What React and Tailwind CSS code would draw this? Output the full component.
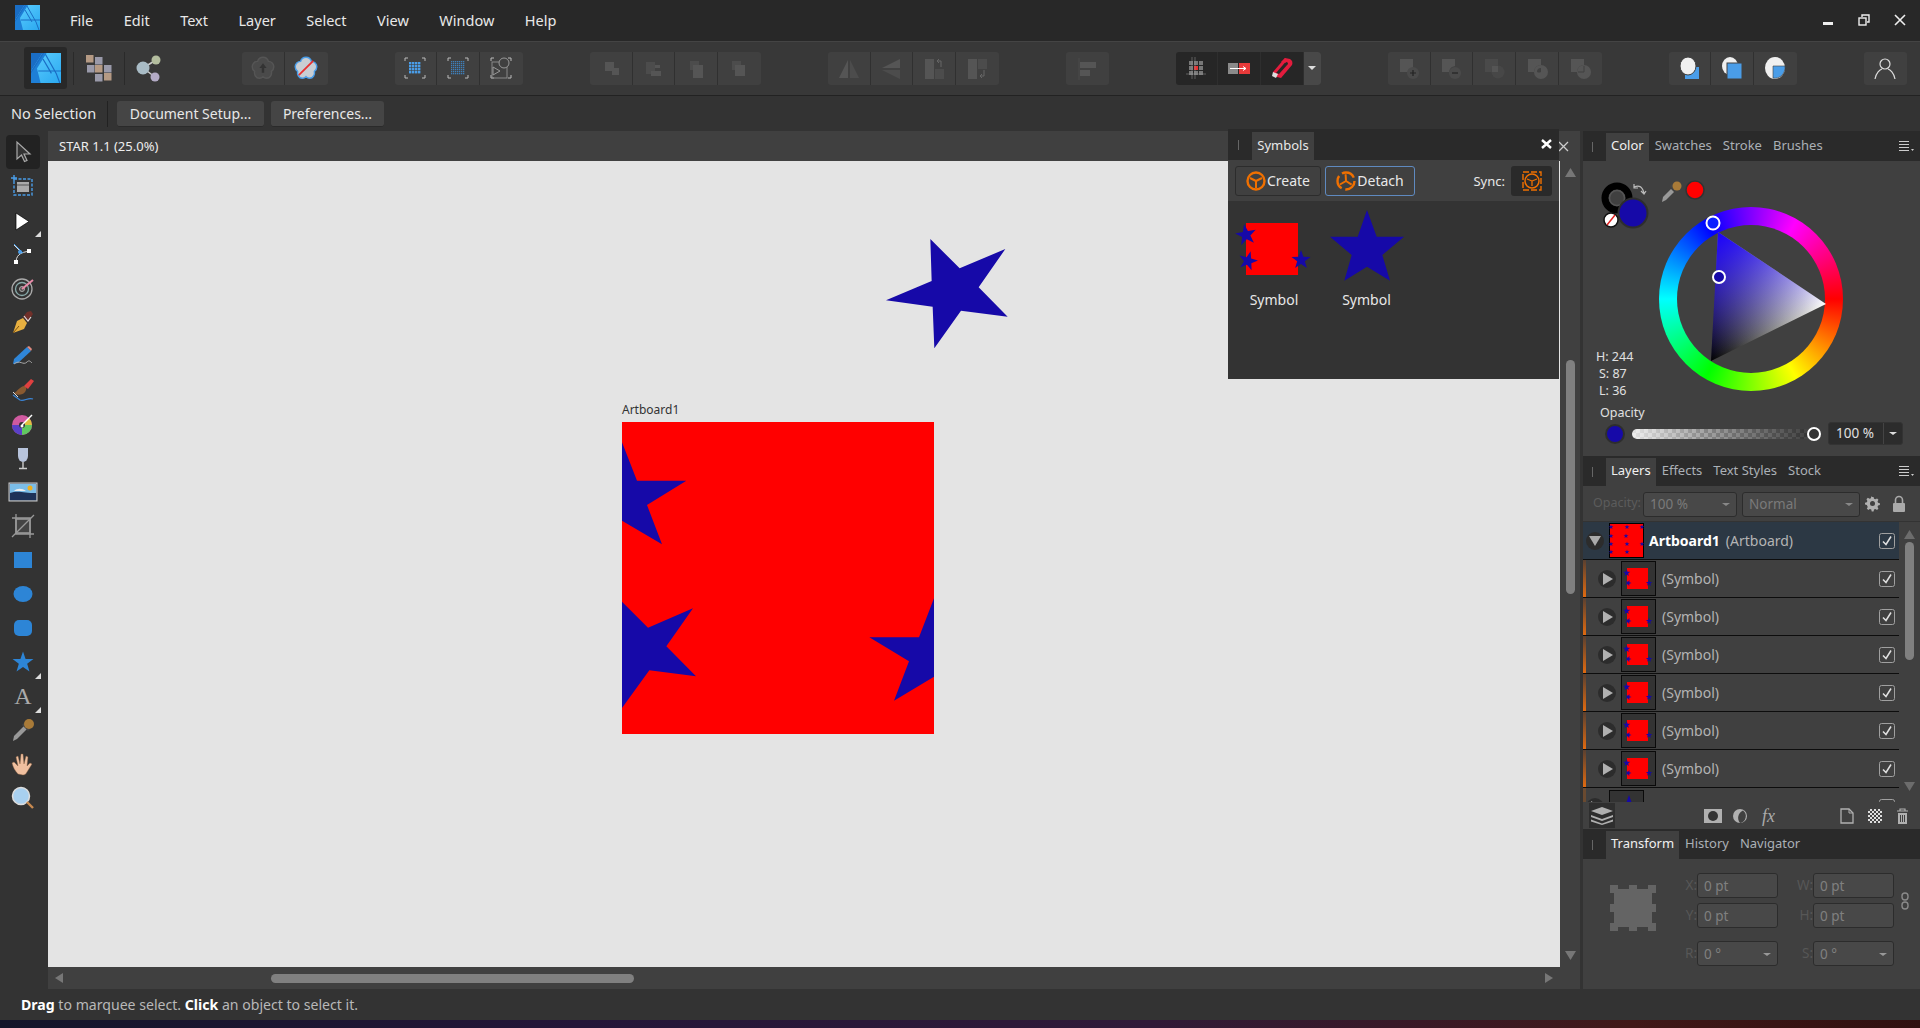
import React from 'react';

const BLUE = '#1609a8';
const starPts = (cx, cy, r, rot = 0) => {
  const p = [];
  for (let i = 0; i < 10; i++) {
    const a = (-90 + rot + i * 36) * Math.PI / 180;
    const rr = i % 2 ? r * 0.4 : r;
    p.push(`${(cx + rr * Math.cos(a)).toFixed(2)},${(cy + rr * Math.sin(a)).toFixed(2)}`);
  }
  return p.join(' ');
};

const S = ({ w = 24, h = 24, vb, children, className = '' }) => (
  <svg width={w} height={h} viewBox={vb || `0 0 ${w} ${h}`} className={`shrink-0 ${className}`}>{children}</svg>
);

const Logo = ({ size = 25 }) => (
  <S w={size} h={size} vb="0 0 25 25">
    <defs>
      <linearGradient id="lg" x1="0" y1="0" x2="1" y2="1"><stop offset="0" stopColor="#5fd0ff" /><stop offset="1" stopColor="#2aa8f0" /></linearGradient>
    </defs>
    <rect width="25" height="25" fill="url(#lg)" />
    <path d="M0 0H9.5L0 15Z" fill="#1a6dc4" />
    <path d="M0 15L9.5 0H12L0 19Z" fill="#1a6dc4" />
    <path d="M0 25V17L11 0H13L5 13L8 25Z" fill="#1e7fd6" />
    <path d="M6 15H25M12 1L21 17L24 25M10 5L17 17" stroke="#1a6dc4" strokeWidth="1" fill="none" />
  </S>
);

const Flower = ({ fill, stroke, children }) => (
  <S vb="2 2 20 20">
    <path d="M12 3c2.500 0 4 1.500 4.500 3.500 2.500 0 4.500 2 4.500 4.500 0 1.700-.9 3-2 3.800.5 2.700-1 5.700-4 5.700-1.200 0-2.200-.5-3-1.300-.8.800-1.800 1.300-3 1.300-3 0-4.500-3-4-5.700-1.100-.8-2-2.100-2-3.800 0-2.500 2-4.500 4.500-4.500C8 4.500 9.500 3 12 3Z" fill={fill} stroke={stroke} strokeWidth="1.200" />
    {children}
  </S>
);

const D = '#555555';
const icons = {
  up: <Flower fill="#4a4a4a" stroke="#555"><path d="M12 8l3 4h-2v4h-2v-4H9Z" fill="#333" /></Flower>,
  flower: <Flower fill="#c9ced3" stroke="#4a9de8"><path d="M6 18L18 6" stroke="#e83030" strokeWidth="1.500" /></Flower>,
  grid1: <S>
    <path d="M2 5V2h3M19 2h3v3M22 19v3h-3M5 22H2v-3" stroke="#bbb" fill="none" />
    {[6, 9, 12, 15].flatMap(x => [6, 9, 12, 15].map(y => <rect key={x + '-' + y} x={x} y={y} width="2.400" height="2.400" fill="#4a9de8" />))}
  </S>,
  grid2: <S>
    <path d="M2 5V2h3M19 2h3v3M22 19v3h-3M5 22H2v-3" stroke="#bbb" fill="none" />
    {[5, 7, 9, 11, 13, 15, 17].flatMap(x => [5, 7, 9, 11, 13, 15, 17].map(y => <rect key={x + '-' + y} x={x} y={y} width="1.300" height="1.300" fill="#3f7fb8" />))}
  </S>,
  sel3: <S>
    <path d="M2 5V2h3M19 2h3v3M22 19v3h-3M5 22H2v-3" stroke="#bbb" fill="none" />
    <rect x="3" y="6" width="15" height="16" fill="none" stroke="#888" />
    <circle cx="15" cy="7" r="5" fill="#404040" stroke="#999" />
    <path d="M4 11l7 4-7 4Z" fill="#404040" stroke="#999" />
  </S>,
  o1: <S><rect x="6" y="6" width="9" height="9" fill={D} /><rect x="13" y="12" width="7" height="7" fill={D} /></S>,
  o2: <S><rect x="5" y="6" width="9" height="12" fill="#4c4c4c" /><rect x="14" y="9" width="5" height="3" fill={D} /><rect x="10" y="15" width="10" height="5" fill={D} /></S>,
  o3: <S><rect x="6" y="5" width="9" height="9" fill="#4c4c4c" /><rect x="9" y="9" width="10" height="13" fill={D} /></S>,
  o4: <S><rect x="5" y="5" width="9" height="9" fill="#4c4c4c" /><rect x="8" y="9" width="10" height="11" fill={D} /></S>,
  f1: <S><path d="M11 4v18H2Z" fill={D} /><path d="M13 4v18h9Z" fill="#4c4c4c" /></S>,
  f2: <S><path d="M21 3v9H3Z" fill={D} /><path d="M21 14v9L3 14Z" fill="#4c4c4c" /></S>,
  f3: <S><rect x="3" y="3" width="9" height="20" fill={D} /><rect x="13" y="13" width="9" height="10" fill="#4c4c4c" /><path d="M19 11V5h-3m1-2l-2 2 2 2" stroke="#666" fill="none" /></S>,
  f4: <S><rect x="3" y="3" width="9" height="20" fill={D} /><rect x="13" y="3" width="9" height="10" fill="#4c4c4c" /><path d="M19 14v6h-4m2-2l-2 2 2 2" stroke="#666" fill="none" /></S>,
  align: <S><path d="M4 2v22" stroke="#4a4a4a" /><rect x="5" y="6" width="16" height="6" fill={D} /><rect x="5" y="14" width="10" height="6" fill={D} /></S>,
  snap1: <S>
    {[5, 10, 15].flatMap(x => [5, 10, 15].map(y => <rect key={x + '-' + y} x={x} y={y} width="4" height="4" fill={x === 10 && y === 10 ? '#e83030' : '#777'} />))}
    <path d="M2 18h20M8 1v22M11 1v22" stroke="#999" strokeWidth=".5" />
  </S>,
  snap2: <S><rect x="1" y="7" width="10" height="11" fill="#8a8a8a" /><rect x="12" y="7" width="11" height="11" fill="#e83a3a" /><path d="M3 12.500h16m-3-2 3 2-3 2" stroke="#fff" fill="none" /></S>,
  magnet: <S>
    <path d="M20 3a5 5 0 0 1 2 6L11 22 3 20 3 16 15 2Z" fill="#e31c3d" />
    <path d="M15.500 6a2 2 0 0 1 2.500 2L9 18l-3-1Z" fill="#262626" />
    <path d="M3 16l5 2-2 4-4-2Z" fill="#ddd" /><path d="M11 6l4-4 3 3-3 2Z" fill="#e31c3d" />
  </S>,
  b1: <S><rect x="3" y="3" width="13" height="13" fill={D} /><circle cx="16" cy="17" r="6" fill="#4a4a4a" /><path d="M13 17h6M16 14v6" stroke="#222" strokeWidth="1.200" /></S>,
  b2: <S><path d="M3 3h13v7a7 7 0 0 0-6 6H3Z" fill={D} /><circle cx="16" cy="17" r="6" fill="#4a4a4a" /><path d="M13 17h6" stroke="#222" strokeWidth="1.200" /></S>,
  b3: <S><rect x="3" y="3" width="13" height="13" fill="#4a4a4a" /><circle cx="16" cy="16" r="6.500" fill="#474747" /><path d="M10 10h6v6h-6Z" fill={D} /></S>,
  b4: <S><path d="M3 3h13v6a7 7 0 0 0-7 7H3Z" fill={D} /><path d="M9 16a7 7 0 0 1 7-7 7 7 0 0 1 0 14 7 7 0 0 1-7-7Zm3 0a4 4 0 0 0 4 0V12a4 4 0 0 0-4 4Z" fill={D} /></S>,
  b5: <S><path d="M3 3h13v6a7 7 0 0 0-7 7H3Z" fill={D} /><circle cx="16" cy="16" r="7" fill={D} /><path d="M16 10v6h-6" stroke="#404040" fill="none" /></S>,
  s1: <S><rect x="8" y="11" width="14" height="12" fill="#4a9de8" /><ellipse cx="11" cy="10" rx="8" ry="9" fill="#f0f0f0" stroke="#404040" /></S>,
  s2: <S><ellipse cx="10" cy="10" rx="8" ry="9" fill="#f0f0f0" /><rect x="7" y="7" width="15" height="16" fill="#4a9de8" stroke="#404040" /></S>,
  s3: <S><ellipse cx="12" cy="12" rx="10" ry="11" fill="#f0f0f0" /><path d="M10 10h12a10 11 0 0 1-12 12Z" fill="#4a9de8" stroke="#404040" strokeWidth=".6" /></S>,
  user: <S>
    <circle cx="12" cy="8" r="5" fill="none" stroke="#ddd" strokeWidth="1.200" />
    <path d="M2 23c1-6 5-9.500 7-10M22 23c-1-6-5-9.500-7-10" fill="none" stroke="#ddd" strokeWidth="1.200" />
  </S>,
};

const Btn = ({ k, dark }) => (
  <div className={`flex h-full w-[42.75px] items-center justify-center border-r last:border-r-0 ${dark ? 'border-[#2e2e2e]' : 'border-[#303030]'}`}>
    {icons[k]}
  </div>
);
const Group = ({ items, dark, children }) => (
  <div className={`flex h-[33px] rounded-[3px] ${dark ? 'bg-[#262626]' : 'bg-[#404040]'}`}>
    {items.map(k => <Btn key={k} k={k} dark={dark} />)}
    {children}
  </div>
);

const Toolbar = () => (
  <div className="flex h-[55px] items-center border-t border-[#444] bg-[#383838] pl-6">
    <div className="flex h-[42px] w-[43px] items-center justify-center rounded-[3px] bg-[#282828]"><Logo size={30} /></div>
    <div className="ml-[6px] h-[33px] w-px bg-[#2a2a2a]" />
    <div className="flex h-[33px] w-[50px] items-center justify-center">
      <S w={28} h={28}>
        {[[1, 1, '#b59a84'], [10, 3, '#9a9aaa'], [2, 11, '#9a9aaa'], [10, 11, '#b59a84'], [19, 11, '#9a9aaa'], [10, 20, '#9a9aaa'], [19, 19, '#b59a84']].map(([x, y, c]) => (
          <rect key={x + '-' + y} x={x} y={y} width="7.500" height="7.500" fill={c} />
        ))}
      </S>
    </div>
    <div className="h-[33px] w-px bg-[#2a2a2a]" />
    <div className="flex h-[33px] w-[46px] items-center justify-center">
      <S w={28} h={28}>
        <path d="M9 14L22 6M9 14L21 23" stroke="#ccc" strokeWidth="1.500" />
        <circle cx="9" cy="14" r="6.500" fill="#a9bcc6" />
        <circle cx="22" cy="6" r="4.500" fill="#b3bd9e" />
        <circle cx="21" cy="23" r="4.500" fill="#b3abc6" />
      </S>
    </div>
    <div className="ml-[71px] flex gap-[67px]">
      <Group items={['up', 'flower']} />
      <Group items={['grid1', 'grid2', 'sel3']} />
      <Group items={['o1', 'o2', 'o3', 'o4']} />
      <Group items={['f1', 'f2', 'f3', 'f4']} />
      <Group items={['align']} />
      <Group items={['snap1', 'snap2', 'magnet']} dark>
        <div className="flex w-[17px] items-center justify-center rounded-r-[3px] bg-[#484848]">
          <div className="h-0 w-0 border-x-[4px] border-t-[4px] border-x-transparent border-t-[#ddd]" />
        </div>
      </Group>
      <Group items={['b1', 'b2', 'b3', 'b4', 'b5']} />
      <Group items={['s1', 's2', 's3']} />
      <Group items={['user']} />
    </div>
  </div>
);

const TitleBar = () => (
  <div className="flex h-[41px] items-center bg-[#282828] pl-[15px] text-[14.500px] text-[#e8e8e8]">
    <div className="-mt-[5px]"><Logo /></div>
    <div className="ml-[30px] flex gap-[30.500px] pt-[2px]">
      {['File', 'Edit', 'Text', 'Layer', 'Select', 'View', 'Window', 'Help'].map(m => <span key={m}>{m}</span>)}
    </div>
    <div className="ml-auto flex items-center gap-[24px] pr-[14px]">
      <S w={12} h={12}><rect x="1" y="8" width="10" height="3" fill="#eee" /></S>
      <S w={12} h={12}><rect x="1" y="4" width="7" height="7" fill="none" stroke="#eee" strokeWidth="1.400" /><path d="M4 3V1h7v7H9" fill="none" stroke="#eee" strokeWidth="1.400" /></S>
      <S w={12} h={12}><path d="M1 1l10 10M11 1L1 11" stroke="#eee" strokeWidth="1.600" /></S>
    </div>
  </div>
);

const CtxBtn = ({ w, children }) => (
  <div className={`flex h-[26px] items-center justify-center rounded-[3px] border-b border-[#2a2a2a] bg-[#454545] text-[14px] text-[#e8e8e8] ${w}`}>{children}</div>
);
const ContextBar = () => (
  <div className="flex h-[36px] items-center border-t border-[#222] bg-[#333333] pl-[11px] text-[14.500px]">
    <span className="w-[96px] pt-[1px] text-[#e8e8e8]">No Selection</span>
    <div className="h-[26px] w-px bg-[#222]" />
    <div className="ml-[9px]"><CtxBtn w="w-[147px]">Document Setup...</CtxBtn></div>
    <div className="ml-[7px]"><CtxBtn w="w-[113px]">Preferences...</CtxBtn></div>
  </div>
);

const tools = [
  <S><path d="M6 2v17l4.500-4 3 6.500 2.500-1-3-6.500h6Z" fill="#333" stroke="#aaa" strokeWidth="1.200" /></S>,
  <S><rect x="3" y="5" width="18" height="16" fill="none" stroke="#4a9de8" strokeWidth="1.400" strokeDasharray="3 1.500" /><rect x="6" y="8" width="12" height="10" fill="#aaa" /><path d="M6 11h12" stroke="#555" /><path d="M3 1v6M0 4h6" stroke="#4a9de8" strokeWidth="1.400" /></S>,
  <S><path d="M5 5v17l13-8.500Z" fill="#fff" stroke="#000" strokeWidth=".7" /></S>,
  <S><path d="M3 3l8 8 M5 21c0-7 3-11 15-12" fill="none" stroke="#ddd" /><path d="M3 2l9 9" stroke="#4a9de8" /><circle cx="9" cy="10" r="2" fill="#4a9de8" /><rect x="16" y="7" width="4" height="4" fill="#fff" /><rect x="3" y="18" width="4" height="4" fill="#fff" /></S>,
  <S><circle cx="11" cy="13" r="10" fill="none" stroke="#aaa" strokeWidth="1.300" /><circle cx="11" cy="13" r="6.500" fill="none" stroke="#8aa" strokeWidth="1.300" /><circle cx="11" cy="13" r="2.500" fill="#555" stroke="#aaa" /><path d="M11 13L22 4" stroke="#e88aa8" strokeWidth="2" /></S>,
  <S><path d="M2 23l4-12 6-3 4 5-3 6Z" fill="#e8b040" /><path d="M2 23l6-7" stroke="#7a5010" /><path d="M12 7l5 5 5-8-2-3-4 1Z" fill="#70302a" /><path d="M13 6l4 5 3-4" stroke="#ddd" strokeWidth="1.200" fill="none" /></S>,
  <S><path d="M2 20l1-5L16 3l4 4L7 19Z" fill="#2f86d8" /><path d="M16 3l2-1 3 3-1 2Z" fill="#e08a80" /><path d="M3 20c6-5 9 2 13-2 2-2 3-1 5 1" fill="none" stroke="#aaa" /></S>,
  <S><path d="M3 15c3-1 5-6 10-7 3 0 3 3 1 6-2 3-8 4-11 1Z" fill="#8a5a30" /><path d="M13 8l7-7 3 2-6 8Z" fill="#e04040" /><path d="M2 17l7 5c4 2 8-3 13-1" fill="none" stroke="#3b86d8" strokeWidth="1.200" /><path d="M2 14l5 5" stroke="#ddd" /></S>,
  <S><circle cx="11" cy="13" r="10" fill="#d05aa0" /><path d="M11 13L1 13A10 10 0 0 0 11 23Z" fill="#5a40c8" /><path d="M11 13L11 23A10 10 0 0 0 21 13Z" fill="#60c860" /><path d="M11 13L21 13A10 10 0 0 0 18 6Z" fill="#e0c040" /><circle cx="11" cy="13" r="3" fill="#333" /><path d="M11 13l10-10" stroke="#fff" strokeWidth="1.400" /><circle cx="11" cy="14" r="1.500" fill="#fff" /></S>,
  <S><path d="M7 2h10v8a5 6 0 0 1-10 0Z" fill="#b8c4dc" /><path d="M12 16v6M8 22.500h8" stroke="#ccc" strokeWidth="1.400" /></S>,
  <S w={30} h={24}><rect x="1" y="3" width="28" height="18" fill="#4a5a70" stroke="#ccc" /><rect x="2" y="4" width="26" height="9" fill="#7bbde8" /><path d="M2 13c8-3 14 0 26 0v7H2Z" fill="#1e3258" /><circle cx="22" cy="8" r="2.500" fill="#eeb020" /><path d="M6 11c3-3 8-3 12 0Z" fill="#eee" /></S>,
  <S><rect x="5" y="5" width="14" height="14" fill="#444" stroke="#999" strokeWidth="1.600" /><path d="M1 4h18v20M23 20H5V0M1 23L23 1" fill="none" stroke="#999" strokeWidth="1.300" /></S>,
  <S><rect x="3" y="4" width="18" height="16" fill="#2d85d6" /></S>,
  <S><ellipse cx="12" cy="12" rx="9.500" ry="8" fill="#2d85d6" /></S>,
  <S><rect x="3" y="4" width="18" height="16" rx="5" fill="#2d85d6" /></S>,
  <S><polygon points={starPts(12, 12.500, 11)} fill="#2d85d6" /></S>,
  <span className="font-['Liberation_Serif',serif] text-[24px] leading-none text-[#aaa]">A</span>,
  <S><path d="M2 23l1-5L13 8l3 3L6 21Z" fill="#999" /><path d="M11 7l6 6 2-2-6-6Z" fill="#444" /><circle cx="18" cy="6" r="5" fill="#a87a38" /></S>,
  <S><path d="M7 22c-3-3-5-7-6-11l2-1 4 4L5 5l2-1 2 8 1-10h2l1 10 2-8 2 1-1 9 3-3 2 1-5 8c-1 2-2 3-4 3Z" fill="#f0c0a0" stroke="#8a6040" strokeWidth=".4" /></S>,
  <S><circle cx="10" cy="10" r="8.500" fill="#a8d0f0" stroke="#ddd" strokeWidth="1.500" /><path d="M16 16l6 6" stroke="#c88a50" strokeWidth="2.400" /></S>,
];
const ToolColumn = () => (
  <div className="w-[48px] shrink-0 bg-[#333333] pt-[4px]">
    {tools.map((t, i) => (
      <div key={i} className={`relative mx-[6px] flex h-[34px] w-[34px] items-center justify-center rounded-[4px] ${i === 0 ? 'bg-[#222222]' : ''}`}>
        {t}
        {(i === 2 || i === 15 || i === 16) && <div className="absolute -right-px bottom-0 h-0 w-0 border-b-[6px] border-l-[6px] border-b-[#ddd] border-l-transparent" />}
      </div>
    ))}
  </div>
);

const Canvas = () => (
  <div className="relative flex-1 overflow-hidden bg-[#e4e4e4]">
    <svg width="140" height="130" viewBox="0 0 420 390" className="absolute left-[832px] top-[69px]">
      <polygon points="151,27 239,115 376,57 296,172 383,260 243,242 163,355 158,230 18,211 155,153" fill={BLUE} />
    </svg>
    <span className="absolute left-[574px] top-[240px] text-[12px] text-[#333]">Artboard1</span>
    <svg width="312" height="312" viewBox="65 97 936 936" className="absolute left-[574px] top-[261px]">
      <rect x="65" y="97" width="936" height="936" fill="#ff0000" />
      <polygon points="65,158 110,273 258,273 140,346 185,464 65,393" fill={BLUE} />
      <polygon points="65,636 143,714 278,656 198,770 287,860 147,842 65,955" fill={BLUE} />
      <polygon points="1001,626 956,743 807,743 926,815 881,933 1001,861" fill={BLUE} />
    </svg>
  </div>
);

const ArrowUp = ({ c = '#777' }) => <svg width="11" height="9"><path d="M5.500 0L11 9H0Z" fill={c} /></svg>;
const ArrowDown = ({ c = '#777' }) => <svg width="11" height="9"><path d="M0 0H11L5.500 9Z" fill={c} /></svg>;

const CenterColumn = () => (
  <div className="flex w-[1532px] shrink-0 flex-col">
    <div className="flex h-[30px] items-center bg-[#404040] pl-[11px] pr-[11px] pt-[1px] text-[13px] text-[#eee]">
      <span>STAR 1.1 (25.0%)</span>
      <svg width="11" height="11" className="ml-auto"><path d="M1 1l9 9M10 1l-9 9" stroke="#ccc" strokeWidth="1.300" /></svg>
    </div>
    <div className="flex flex-1">
      <Canvas />
      <div className="flex w-[20px] shrink-0 flex-col items-center bg-[#404040] pt-[7px]">
        <ArrowUp />
        <div className="mt-[183px] h-[234px] w-[9px] rounded-full bg-[#808080]" />
        <div className="mt-auto mb-[7px]"><ArrowDown /></div>
      </div>
    </div>
    <div className="flex h-[22px] items-center bg-[#404040]">
      <div className="ml-[7px] h-0 w-0 border-y-[5px] border-r-[8px] border-y-transparent border-r-[#777]" />
      <div className="ml-[208px] h-[9px] w-[363px] rounded-full bg-[#808080]" />
      <div className="ml-[911px] h-0 w-0 border-y-[5px] border-l-[8px] border-y-transparent border-l-[#777]" />
    </div>
  </div>
);

const TabBar = ({ tabs, menu = true }) => (
  <div className="flex h-[30px] shrink-0 items-end bg-[#2a2a2a] text-[13px]">
    <div className="mb-[9px] ml-[9px] h-[10px] w-px bg-[#666]" />
    <div className="ml-[13px] flex h-[28px] items-center">
      {tabs.map((t, i) => (
        <span key={t} className={i === 0 ? 'flex h-full items-center bg-[#404040] px-[5px] pb-[2px] text-[#f0f0f0]' : 'mb-[2px] ml-[6px] mr-[5px] text-[#aab0b6]'}>{t}</span>
      ))}
    </div>
    {menu && (
      <div className="mb-[9px] ml-auto mr-[6px] flex">
        <svg width="15" height="12"><path d="M0 1.500h10M0 4.500h10M0 7.500h10M0 10.500h10" stroke="#ccc" /><path d="M12 9h3l-1.500 2Z" fill="#ccc" /></svg>
      </div>
    )}
  </div>
);

const ColorPanel = () => (
  <div className="flex h-[295px] shrink-0 flex-col bg-[#404040] text-[#e0e0e0]">
    <div className="mt-[19px] flex h-[220px]">
      <div className="flex w-[76px] shrink-0 flex-col justify-between pb-[1px] pl-[13px]">
        <svg width="110" height="50" className="shrink-0">
          <circle cx="21" cy="18" r="12" fill="none" stroke="#000" strokeWidth="7" />
          <circle cx="21" cy="18" r="7.500" fill="none" stroke="#555" strokeWidth="1.500" />
          <circle cx="37" cy="33" r="14.500" fill={BLUE} stroke="#2e2e2e" strokeWidth="2" />
          <circle cx="15" cy="40" r="7" fill="#fff" stroke="#111" strokeWidth="1.500" />
          <path d="M11 45l8-10" stroke="#e02020" strokeWidth="1.500" />
          <path d="M38 7c5-2 8-1 10 6M38 4v4h4M45 11l3 3 2-3" fill="none" stroke="#bbb" strokeWidth="1.200" />
          <path d="M66 22l1-5 8-8 3 3-8 8Z" fill="#999" />
          <path d="M74 6l6 6 2-2-6-6Z" fill="#444" />
          <circle cx="81" cy="6" r="4.500" fill="#a87a38" />
          <circle cx="99" cy="10" r="9" fill="#ff0000" stroke="#333" strokeWidth="1.500" />
        </svg>
        <div className="flex flex-col text-[12.500px] leading-[17px]">
          <span>H: 244</span>
          <span className="pl-[3px]">S: 87</span>
          <span className="pl-[3px]">L: 36</span>
        </div>
      </div>
      <div className="relative mt-[27px] flex h-[184px] w-[184px] items-center justify-center rounded-full bg-[conic-gradient(from_90deg,#ff0000,#ffff00,#00ff00,#00ffff,#0000ff,#ff00ff,#ff0000)]">
        <div className="h-[148px] w-[148px] rounded-full bg-[#404040]" />
        <svg width="184" height="184" className="absolute inset-0">
          <defs>
            <linearGradient id="tw" gradientUnits="userSpaceOnUse" x1="52" y1="154" x2="167" y2="97"><stop offset="0" stopColor="#000" /><stop offset="1" stopColor="#fff" /></linearGradient>
            <linearGradient id="tb" gradientUnits="userSpaceOnUse" x1="59" y1="25" x2="110" y2="125"><stop offset="0" stopColor="#1a00ff" /><stop offset="1" stopColor="#1a00ff" stopOpacity="0" /></linearGradient>
          </defs>
          <polygon points="59,25 167,97 52,154" fill="url(#tw)" />
          <polygon points="59,25 167,97 52,154" fill="url(#tb)" />
          <circle cx="54" cy="16" r="6.500" fill="#0a20ff" stroke="#fff" strokeWidth="2" />
          <circle cx="60" cy="70" r="6" fill={BLUE} stroke="#fff" strokeWidth="2" />
        </svg>
      </div>
    </div>
    <span className="ml-[17px] mt-[5px] h-[16px] text-[12.500px] leading-[16px]">Opacity</span>
    <div className="mt-[1px] flex h-[23px] items-center pl-[22px]">
      <div className="h-[20px] w-[20px] rounded-full border-2 border-[#2e2e2e] bg-[#1609a8]" />
      <div className="relative ml-[7px] mt-[1px] h-[10px] w-[182px] rounded-full bg-[linear-gradient(90deg,rgba(255,255,255,0.82),rgba(160,160,160,0.55)_40%,rgba(35,35,35,0.8)),repeating-conic-gradient(#a8a8a8_0_25%,#666666_0_50%)] bg-[length:100%_100%,8px_8px]">
        <div className="absolute -right-[7px] -top-[2px] h-[14px] w-[14px] rounded-full border-2 border-white bg-[#333]" />
      </div>
      <div className="ml-[14px] flex h-[23px] w-[75px] items-center rounded-[3px] border border-[#333] bg-[#2c2c2c] pl-[7px] text-[13.500px]">
        <span>100 %</span>
        <div className="ml-auto flex h-full w-[19px] items-center justify-center border-l border-[#444]">
          <div className="h-0 w-0 border-x-[4px] border-t-[3px] border-x-transparent border-t-[#ddd]" />
        </div>
      </div>
    </div>
  </div>
);

const SymThumb = () => (
  <svg width="35" height="35" className="shrink-0">
    <rect x=".5" y=".5" width="34" height="34" fill="#333" stroke="#0a0a0a" />
    <rect x="6" y="7" width="21" height="21" fill="#ff0000" />
    <polygon points={starPts(5.700, 12, 3.800)} fill={BLUE} />
    <polygon points={starPts(7.300, 22, 3.300, 20)} fill={BLUE} />
    <polygon points={starPts(28, 22, 3.300)} fill={BLUE} />
  </svg>
);
const Check = () => (
  <svg width="16" height="16" className="shrink-0">
    <rect x=".5" y=".5" width="15" height="15" rx="2" fill="none" stroke="#a0a0a0" />
    <path d="M4 8.500l3 3 5-8" fill="none" stroke="#e0e0e0" strokeWidth="1.500" />
  </svg>
);
const Expand = ({ down }) => (
  <div className="flex h-[18px] w-[18px] shrink-0 items-center justify-center rounded-full bg-[#2c2c2c]">
    {down ? (
      <div className="h-0 w-0 border-x-[6px] border-t-[10px] border-x-transparent border-t-[#aaa]" />
    ) : (
      <div className="ml-[2px] h-0 w-0 border-y-[6px] border-l-[10px] border-y-transparent border-l-[#b0b0b0]" />
    )}
  </div>
);
const SymbolRow = () => (
  <div className="relative flex h-[38px] items-center border-b border-[#0d0d0d] pl-[15px] pr-[4px]">
    <div className="absolute left-0 top-0 h-full w-[3px] bg-[linear-gradient(180deg,#5a4030,#e06a10)]" />
    <Expand />
    <div className="ml-[5px]"><SymThumb /></div>
    <span className="ml-[6px] text-[14px] text-[#b4b4b4]">(Symbol)</span>
    <div className="ml-auto"><Check /></div>
  </div>
);

const abStars = [[2, 4], [18, 4], [33, 4], [2, 13], [17, 13], [2, 21], [18, 21], [33, 21], [2, 29], [18, 29]];

const Select = ({ w, children }) => (
  <div className={`mt-[1px] flex h-[25px] items-center rounded-[3px] border border-[#2c2c2c] bg-[#484848] pl-[6px] pr-[6px] text-[13.500px] text-[#7a7a7a] ${w}`}>
    <span>{children}</span>
    <div className="ml-auto h-0 w-0 border-x-[4px] border-t-[3px] border-x-transparent border-t-[#888]" />
  </div>
);

const LayersPanel = () => (
  <div className="flex shrink-0 flex-col bg-[#404040]">
    <div className="flex h-[36px] items-center border-b border-[#333] pl-[10px] text-[12.500px] text-[#5c5c5c]">
      <span className="w-[50px]">Opacity:</span>
      <Select w="w-[94px]">100 %</Select>
      <div className="ml-[5px]"><Select w="w-[118px]">Normal</Select></div>
      <div className="ml-[5px] flex items-center gap-[11px]">
        <svg width="16" height="16" viewBox="0 0 16 16"><path d="M8 1l1.300 0 .5 2 1.500.6 1.800-1 1.500 1.500-1 1.800.6 1.500 2 .5v2l-2 .5-.6 1.500 1 1.800-1.500 1.500-1.800-1-1.500.6-.5 2h-2l-.5-2-1.500-.6-1.800 1-1.500-1.500 1-1.800L2 9.800l-2-.5v-2l2-.5.6-1.500-1-1.800 1.500-1.500 1.800 1 1.500-.6.500-2Z" fill="#b0b0b0" transform="scale(.92)" /><circle cx="7.500" cy="7.500" r="2.500" fill="#404040" /></svg>
        <svg width="14" height="18"><rect x="1" y="8" width="12" height="9" rx="1" fill="#aaa" /><path d="M3.500 8V5a3.500 3.500 0 0 1 7 0v3" fill="none" stroke="#aaa" strokeWidth="1.600" /></svg>
      </div>
    </div>
    <div className="flex h-[280px] overflow-hidden">
      <div className="w-[316px] shrink-0">
        <div className="flex h-[38px] items-center border-b border-[#0d0d0d] bg-[#2c3844] pl-[3px] pr-[4px] text-[14px]">
          <Expand down />
          <svg width="35" height="35" className="ml-[5px] shrink-0">
            <rect x=".5" y=".5" width="34" height="34" fill="#ff0000" stroke="#000" />
            {abStars.map(([x, y]) => <polygon key={x + '-' + y} points={starPts(x, y, 2.600)} fill={BLUE} />)}
          </svg>
          <span className="ml-[5px] font-bold text-white">Artboard1</span>
          <span className="ml-[6px] text-[#b4b4b4]">(Artboard)</span>
          <div className="ml-auto"><Check /></div>
        </div>
        {[0, 1, 2, 3, 4, 5].map(i => <SymbolRow key={i} />)}
        <div className="relative flex h-[38px] items-center pl-[3px] pr-[4px]">
          <div className="absolute left-0 top-0 h-full w-[3px] bg-[#6a4a30]" />
          <Expand />
          <svg width="35" height="35" className="ml-[5px] shrink-0">
            <rect x=".5" y=".5" width="34" height="34" fill="#333" stroke="#0a0a0a" />
            <polygon points={starPts(20, 19, 14)} fill={BLUE} />
          </svg>
          <span className="ml-[5px] text-[14px] text-[#b4b4b4]">(Symbol)</span>
          <div className="ml-auto"><Check /></div>
        </div>
      </div>
      <div className="flex flex-1 flex-col items-center bg-[#404040] pt-[8px]">
        <ArrowUp c="#6c6c6c" />
        <div className="mt-[3px] h-[118px] w-[9px] rounded-full bg-[#808080]" />
        <div className="mt-[122px]"><ArrowDown c="#6c6c6c" /></div>
      </div>
    </div>
    <div className="flex h-[27px] items-center bg-[#404040] pl-[6px]">
      <div className="flex h-[25px] w-[26px] items-center justify-center bg-[#2e2e2e]">
        <svg width="22" height="18"><path d="M11 0l11 4-11 4L0 4Z" fill="#b0b0b0" /><path d="M0 8l11 4 11-4v2l-11 4-11-4ZM0 12.500l11 4 11-4v2l-11 3.500-11-3.500Z" fill="#b0b0b0" /></svg>
      </div>
      <div className="ml-[89px] flex items-center gap-[10px]">
        <svg width="18" height="14"><rect width="18" height="14" fill="#b0b0b0" /><circle cx="9" cy="7" r="5" fill="#333" /></svg>
        <svg width="16" height="16"><circle cx="8" cy="8" r="7" fill="#b0b0b0" /><path d="M11 2.500A7 7 0 0 1 8 15a8 8 0 0 1 3-12.500Z" fill="#404040" /></svg>
        <span className="ml-[4px] w-[18px] font-['Liberation_Serif',serif] text-[18px] italic leading-none text-[#aaa]">fx</span>
      </div>
      <div className="ml-[60px] flex items-center gap-[14px]">
        <svg width="14" height="16"><path d="M1 1h8l4 4v10H1Z" fill="none" stroke="#b0b0b0" strokeWidth="1.300" /><path d="M9 1v4h4" fill="none" stroke="#b0b0b0" /></svg>
        <svg width="14" height="14">
          <rect width="14" height="14" fill="#ddd" />
          {[0, 4, 8, 12].flatMap(x => [0, 4, 8, 12].map(y => <rect key={x + '-' + y} x={x} y={y} width="2" height="2" fill="#444" />))}
          {[2, 6, 10].flatMap(x => [2, 6, 10].map(y => <rect key={'b' + x + '-' + y} x={x} y={y} width="2" height="2" fill="#444" />))}
        </svg>
        <svg width="13" height="16"><path d="M1 3h11M4 3V1h5v2" fill="none" stroke="#b0b0b0" strokeWidth="1.200" /><path d="M2 5h9v11H2Z" fill="#b0b0b0" /><path d="M4.500 7v7M6.500 7v7M8.500 7v7" stroke="#404040" /></svg>
      </div>
    </div>
  </div>
);

const Field = ({ label, children, drop, className = '' }) => (
  <div className={`flex items-center ${className}`}>
    <span className="w-[16px] text-right text-[13.500px] text-[#575757]">{label}</span>
    <div className="flex h-[25px] w-[81px] items-center rounded-[3px] border border-[#2c2c2c] bg-[#484848] px-[6px] pt-[1px] text-[13.500px] text-[#808080]">
      <span>{children}</span>
      {drop && <div className="ml-auto h-0 w-0 border-x-[4px] border-t-[3px] border-x-transparent border-t-[#999]" />}
    </div>
  </div>
);

const TransformPanel = () => (
  <div className="flex h-[130px] shrink-0 bg-[#404040] pl-[27px] pt-[14px]">
    <svg width="46" height="46" className="mt-[12px] shrink-0">
      <rect x="4" y="4" width="38" height="38" fill="#646464" />
      {[0, 19, 38].flatMap(x => [0, 19, 38].map(y => (x === 19 && y === 19) ? null : <rect key={x + '-' + y} x={x} y={y} width="8" height="8" fill="#646464" />))}
    </svg>
    <div className="ml-[25px] grid grid-cols-[auto_auto] content-start gap-x-[19px]">
      <Field label="X:">0 pt</Field>
      <Field label="W:">0 pt</Field>
      <Field className="mt-[5px]" label="Y:">0 pt</Field>
      <Field className="mt-[5px]" label="H:">0 pt</Field>
      <Field className="mt-[13px]" label="R:" drop>0 °</Field>
      <Field className="mt-[13px]" label="S:" drop>0 °</Field>
    </div>
    <svg width="8" height="18" className="ml-[7px] mt-[19px] shrink-0"><rect x="1" y="1" width="6" height="7" rx="3" fill="none" stroke="#8a8a8a" strokeWidth="1.400" /><rect x="1" y="10" width="6" height="7" rx="3" fill="none" stroke="#8a8a8a" strokeWidth="1.400" /></svg>
  </div>
);

const RightColumn = () => (
  <div className="ml-[3px] flex w-[337px] shrink-0 flex-col">
    <TabBar tabs={['Color', 'Swatches', 'Stroke', 'Brushes']} />
    <ColorPanel />
    <TabBar tabs={['Layers', 'Effects', 'Text Styles', 'Stock']} />
    <LayersPanel />
    <TabBar tabs={['Transform', 'History', 'Navigator']} menu={false} />
    <TransformPanel />
  </div>
);

const Ring = ({ variant }) => (
  <svg width="20" height="20" className="shrink-0" viewBox="0 0 20 20">
    <circle cx="10" cy="10" r="8.500" fill="none" stroke="#f07000" strokeWidth="2.400" strokeDasharray={variant === 'detach' ? '14 3.800' : undefined} />
    <path d="M10 10L4 7M10 10l6-3M10 10v7" stroke="#f07000" strokeWidth="2" fill="none" transform={variant === 'detach' ? 'rotate(60 10 10)' : undefined} />
  </svg>
);
const SymbolsPanel = () => (
  <div className="absolute left-[1228px] top-[129px] flex h-[250px] w-[331px] flex-col bg-[#333333] text-[#e8e8e8]">
    <div className="flex h-[31px] items-end bg-[#2a2a2a] text-[13px]">
      <div className="mb-[10px] ml-[10px] h-[10px] w-px bg-[#666]" />
      <div className="ml-[13px] flex h-[28px] w-[62px] items-center justify-center bg-[#404040] pb-[1px]">Symbols</div>
      <svg width="11" height="10" className="mb-[11px] ml-auto mr-[7px]"><path d="M1 1l9 8M10 1L1 9" stroke="#fff" strokeWidth="2.400" /></svg>
    </div>
    <div className="flex h-[41px] items-center bg-[#404040] pl-[7px] text-[14px]">
      <div className="flex h-[30px] w-[86px] items-center justify-center gap-[1px] rounded-[3px] border border-[#2c2c2c] bg-[#404040]"><Ring />Create</div>
      <div className="ml-[4px] flex h-[30px] w-[90px] items-center justify-center gap-[1px] rounded-[3px] border border-[#5f8ac0] bg-[#404040]"><Ring variant="detach" />Detach</div>
      <span className="ml-auto pt-[2px] text-[13px]">Sync:</span>
      <div className="ml-[6px] mr-[7px] flex h-[30px] w-[41px] items-center justify-center rounded-[3px] bg-[#2a2a2a]">
        <svg width="20" height="20"><rect x="1" y="1" width="18" height="18" fill="none" stroke="#f07000" strokeWidth="1.400" strokeDasharray="6 2" /><circle cx="10" cy="10" r="7" fill="#2a2a2a" stroke="#f07000" strokeWidth="1.500" /><path d="M10 10L5 8M10 10l5-2M10 10v5" stroke="#f07000" strokeWidth="1.300" /></svg>
      </div>
    </div>
    <div className="flex gap-[12px] pl-[5px] pt-[8px] text-[14px]">
      <div className="flex w-[81px] flex-col items-center">
        <svg width="81" height="65" viewBox="0 0 81 65" className="mt-[2px]">
          <rect x="13" y="12" width="52" height="52" fill="#ff0000" />
          <polygon points={starPts(13, 24, 11, -10)} fill={BLUE} />
          <polygon points={starPts(15, 50, 10, 15)} fill={BLUE} />
          <polygon points={starPts(68, 49, 10)} fill={BLUE} />
        </svg>
        <span className="mt-[13px] pl-[1px]">Symbol</span>
      </div>
      <div className="flex w-[81px] flex-col items-center">
        <svg width="76" height="73" viewBox="-1 0 76 73" className="mt-[1px]">
          <polygon points="37,0 46.700,26.700 74,26.700 52.300,45 60,70.700 37,56.700 14.300,70.700 21.700,45 0,26.700 27.700,26.700" fill={BLUE} />
        </svg>
        <span className="mt-[6px]">Symbol</span>
      </div>
    </div>
  </div>
);

export default function App() {
  return (
    <div className="relative flex h-[1028px] w-[1920px] flex-col overflow-hidden bg-[#333333] font-['Noto_Sans','Open_Sans',sans-serif] text-[14px]">
      <TitleBar />
      <Toolbar />
      <ContextBar />
      <div className="flex h-[858px] shrink-0 overflow-hidden">
        <ToolColumn />
        <CenterColumn />
        <RightColumn />
      </div>
      <div className="flex h-[31px] shrink-0 items-center bg-[#333333] pl-[21px] pt-[1px] text-[14.100px] text-[#b8b8b8]">
        <b className="text-white">Drag</b>&nbsp;to marquee select.&nbsp;<b className="text-white">Click</b>&nbsp;an object to select it.
      </div>
      <div className="h-[8px] shrink-0 bg-[linear-gradient(90deg,#14162a,#241638_30%,#301a38_60%,#401818_85%,#301010)]" />
      <SymbolsPanel />
    </div>
  );
}
